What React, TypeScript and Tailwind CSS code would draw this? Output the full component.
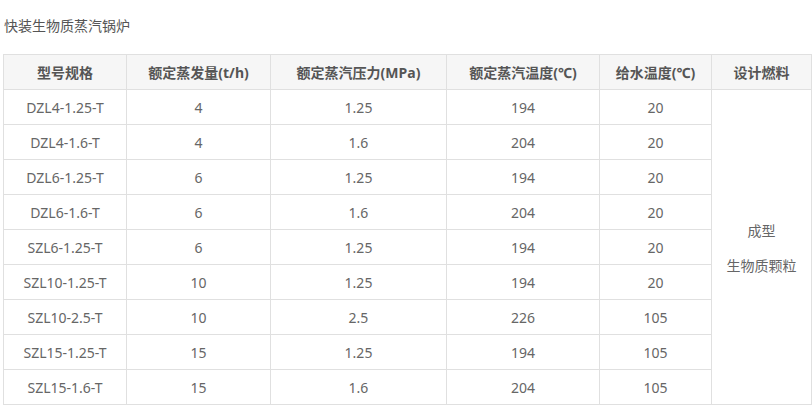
const rows = [
  ['DZL4-1.25-T', '4', '1.25', '194', '20'],
  ['DZL4-1.6-T', '4', '1.6', '204', '20'],
  ['DZL6-1.25-T', '6', '1.25', '194', '20'],
  ['DZL6-1.6-T', '6', '1.6', '204', '20'],
  ['SZL6-1.25-T', '6', '1.25', '194', '20'],
  ['SZL10-1.25-T', '10', '1.25', '194', '20'],
  ['SZL10-2.5-T', '10', '2.5', '226', '105'],
  ['SZL15-1.25-T', '15', '1.25', '194', '105'],
  ['SZL15-1.6-T', '15', '1.6', '204', '105'],
];

const heads = ['型号规格', '额定蒸发量(t/h)', '额定蒸汽压力(MPa)', '额定蒸汽温度(℃)', '给水温度(℃)', '设计燃料'];
const widths = ['w-[123px]', 'w-[144px]', 'w-[176px]', 'w-[153px]', 'w-[112px]', 'w-[100px]'];

export default function App() {
  return (
    <div className="w-[812px] h-[408px] bg-white overflow-hidden pl-[3px] font-['Noto_Sans','Noto_Sans_CJK_SC',sans-serif] text-[14px] text-[#666]">
      <div className="h-[54px] pt-[16px] pl-px leading-[20px] text-[#555]">快装生物质蒸汽锅炉</div>
      <table className="border-collapse table-fixed w-[808px]">
        <thead>
          <tr className="bg-[#f6f6f6] h-[35px]">
            {heads.map((h, i) => (
              <th key={h} className={`${widths[i]} border border-[#e0e0e0] font-bold text-[#555] text-center p-0`}>
                {h}
              </th>
            ))}
          </tr>
        </thead>
        <tbody>
          {rows.map((r, ri) => (
            <tr key={r[0]} className="h-[35px]">
              {r.map((c, ci) => (
                <td key={ci} className="border border-[#e0e0e0] text-center p-0">
                  {c}
                </td>
              ))}
              {ri === 0 && (
                <td rowSpan={9} className="border border-[#e0e0e0] text-center p-0">
                  <div className="flex flex-col items-center gap-[17px] leading-[18px] pt-[2px]">
                    <span>成型</span>
                    <span>生物质颗粒</span>
                  </div>
                </td>
              )}
            </tr>
          ))}
        </tbody>
      </table>
    </div>
  );
}
